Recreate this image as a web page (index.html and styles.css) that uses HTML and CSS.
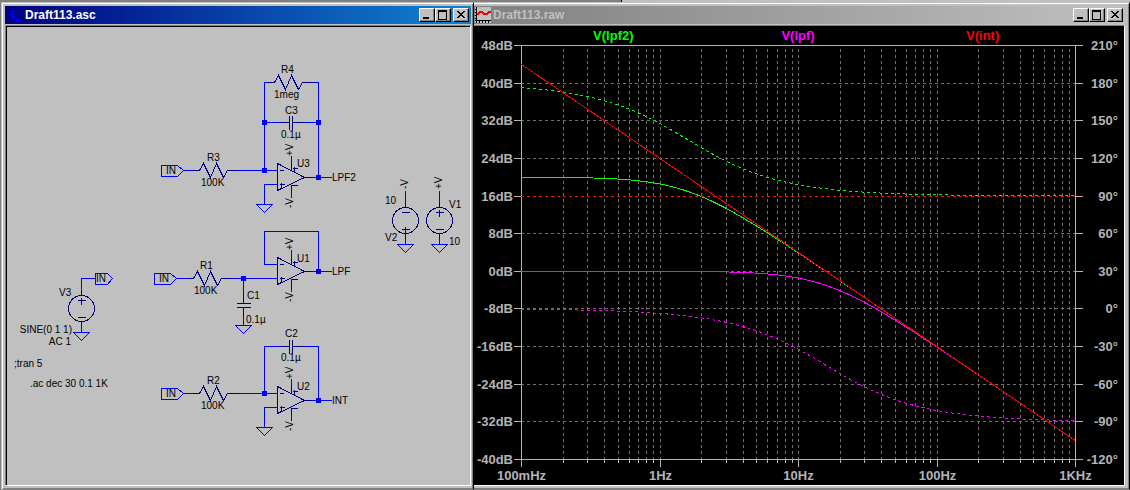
FILE: index.html
```html
<!DOCTYPE html>
<html lang="en">
<head>
<meta charset="utf-8">
<title>Draft113</title>
<link rel="stylesheet" href="styles.css">
</head>
<body>
<div class="workspace-edge"></div>
<main class="windows">
  <section class="window window-schematic">
    <header class="titlebar titlebar-active">
      <svg class="title-icon" width="16" height="16" viewBox="0 0 16 16" aria-hidden="true">
        <path d="M0 7.500H4M10 0L4 6M4 8L11 15" fill="none" stroke="#0000ff"/>
        <path d="M4 3V12" stroke="#0000ff" stroke-width="2"/>
        <path d="M11 16L6 14L9 11Z" fill="#0000ff"/>
      </svg>
      <h1 class="title">Draft113.asc</h1>
      <div class="controls">
        <button class="control" aria-label="Minimize"><svg width="12" height="10"><path d="M2 8H8" stroke="#000" stroke-width="2"/></svg></button>
        <button class="control" aria-label="Maximize"><svg width="12" height="10"><path d="M1.500 1V9.500H9.500V1" fill="none" stroke="#000"/><path d="M1 1H10" stroke="#000" stroke-width="2"/></svg></button>
        <button class="control control-close" aria-label="Close"><svg width="12" height="10"><path d="M2 1L9 8M3 1L10 8M9 1L2 8M10 1L3 8" stroke="#000"/></svg></button>
      </div>
    </header>
    <div class="canvas">
      <svg class="schematic" width="462" height="458" viewBox="7 27 462 458" role="img" aria-label="Filter schematic">
        <defs>
          <path id="resistor" class="part" d="M-7 0H0L4 -7L11 7L17 -7L24 7L28 0H38"/>
          <path id="tag" class="wire" d="M0 0L-6 -5H-22V6H-6Z"/>
          <path id="cap" class="part" d="M-12 0H-1M2 0H15M-1 -7V7M2 -7V7"/>
          <path id="ground" class="wire" d="M-8 0H8L0 8Z"/>
          <rect id="node" x="-2.500" y="-2.500" width="5" height="5" fill="#0000ff"/>
          <g id="opamp">
            <path class="part" d="M0 -14V13L27 0ZM2 -7H6M2 7H7M4 5V10M14 -15V-8M15 -9H20M17 -11V-6M14 7V14M14 8H20M27 0H34"/>
            <path class="wire" d="M14 -22V-15M14 14V20M-6 -7H0M34 0H54"/>
          </g>
          <g id="source">
            <circle class="part" r="13"/>
            <path class="part" d="M0 -18V-13M0 13V18"/>
            <path class="wire" d="M0 -30V-18M0 18V24"/>
          </g>
          <path id="plus" class="part" d="M-4 0H4M0 -3V4"/>
          <path id="minus" class="part" d="M-4 0H4"/>
        </defs>
        <g transform="translate(.5 .5)">
          <path class="wire" d="M183 170H193M237 170H277M264 170V82H268M311 82H318V177M264 122H279M305 122H318M277 184H264V204"/>
          <path class="wire" d="M176 278H187M231 278H277M277 264H264V231H318V271M243 278V295M243 316V325"/>
          <path class="part" d="M243 292V303M236 303H250M236 307H250M243 307V316"/>
          <path class="wire" d="M183 393H193M237 393H277M264 393V346H279M305 346H318V400M277 407H264V427"/>
          <path class="wire" d="M81 279V278H95"/>
          <use href="#tag" x="183" y="170"/><use href="#tag" x="176" y="278"/><use href="#tag" x="183" y="393"/>
          <path class="wire" d="M95 273H107L112 278L107 284H95Z"/>
          <use href="#resistor" x="199" y="170"/><use href="#resistor" x="274" y="82"/>
          <use href="#resistor" x="193" y="278"/><use href="#resistor" x="199" y="393"/>
          <use href="#cap" x="290" y="122"/><use href="#cap" x="290" y="346"/>
          <use href="#opamp" x="277" y="177"/><use href="#opamp" x="277" y="271"/><use href="#opamp" x="277" y="400"/>
          <use href="#ground" x="264" y="204"/><use href="#ground" x="243" y="325"/><use href="#ground" x="264" y="427"/>
          <use href="#ground" x="81" y="332"/><use href="#ground" x="405" y="244"/><use href="#ground" x="439" y="244"/>
          <use href="#source" x="81" y="308"/><use href="#source" x="405" y="220"/><use href="#source" x="439" y="220"/>
          <use href="#plus" x="81" y="300"/><use href="#minus" x="81" y="317"/>
          <use href="#minus" x="405" y="212"/><use href="#plus" x="405" y="229"/>
          <use href="#plus" x="439" y="212"/><use href="#minus" x="439" y="229"/>
          <use href="#node" x="264" y="122"/><use href="#node" x="318" y="122"/>
          <use href="#node" x="264" y="170"/><use href="#node" x="318" y="177"/>
          <use href="#node" x="243" y="278"/><use href="#node" x="318" y="271"/>
          <use href="#node" x="264" y="393"/><use href="#node" x="318" y="400"/>
        </g>
        <g class="labels">
          <text x="281" y="73">R4</text><text x="274" y="98">1meg</text>
          <text x="285" y="114">C3</text><text x="281" y="138">0.1µ</text>
          <text x="207" y="161">R3</text><text x="201" y="186">100K</text>
          <text x="297" y="167">U3</text><text x="332" y="181">LPF2</text><text x="166" y="174">IN</text>
          <text x="200" y="269">R1</text><text x="194" y="294">100K</text>
          <text x="297" y="262">U1</text><text x="332" y="275">LPF</text><text x="159" y="282">IN</text>
          <text x="247" y="299">C1</text><text x="246" y="323">0.1µ</text>
          <text x="285" y="337">C2</text><text x="281" y="361">0.1µ</text>
          <text x="207" y="384">R2</text><text x="201" y="409">100K</text>
          <text x="297" y="390">U2</text><text x="332" y="404">INT</text><text x="166" y="397">IN</text>
          <text x="59" y="296">V3</text><text x="96" y="282">IN</text>
          <text x="72" y="333" text-anchor="end">SINE(0 1 1)</text><text x="71" y="345" text-anchor="end">AC 1</text>
          <text x="14" y="367">;tran 5</text><text x="30" y="387">.ac dec 30 0.1 1K</text>
          <text x="385" y="204">10</text><text x="385" y="241">V2</text>
          <text x="449" y="208">V1</text><text x="449" y="245">10</text>
          <text transform="translate(293 156) rotate(-90)">+V</text><text transform="translate(293 208) rotate(-90)">-V</text>
          <text transform="translate(293 250) rotate(-90)">+V</text><text transform="translate(293 302) rotate(-90)">-V</text>
          <text transform="translate(293 379) rotate(-90)">+V</text><text transform="translate(293 431) rotate(-90)">-V</text>
          <text transform="translate(408 189) rotate(-90)">-V</text><text transform="translate(442 189) rotate(-90)">+V</text>
        </g>
      </svg>
    </div>
  </section>

  <section class="window window-plot">
    <header class="titlebar titlebar-inactive">
      <svg class="title-icon" width="16" height="16" viewBox="0 0 16 16" aria-hidden="true">
        <path d="M0 0H16V16H0Z" fill="#c0c0c0"/>
        <path d="M1.500 0V16M0 13.500H16" stroke="#000"/>
        <path d="M0 2.500H2M0 5.500H2M0 8.500H2M0 11.500H2M4.500 13V16M7.500 13V16M10.500 13V16M13.500 13V16" stroke="#000"/>
        <path d="M2 8L5 5H7L9 7H12L14 5H16" fill="none" stroke="#ff0000" stroke-width="1.500"/>
      </svg>
      <h2 class="title">Draft113.raw</h2>
      <div class="controls">
        <button class="control" aria-label="Minimize"><svg width="12" height="10"><path d="M2 8H8" stroke="#000" stroke-width="2"/></svg></button>
        <button class="control" aria-label="Maximize"><svg width="12" height="10"><path d="M1.500 1V9.500H9.500V1" fill="none" stroke="#000"/><path d="M1 1H10" stroke="#000" stroke-width="2"/></svg></button>
        <button class="control control-close" aria-label="Close"><svg width="12" height="10"><path d="M2 1L9 8M3 1L10 8M9 1L2 8M10 1L3 8" stroke="#000"/></svg></button>
      </div>
    </header>
    <div class="canvas canvas-plot">
      <svg class="plot" id="plot" role="img" aria-label="AC analysis, magnitude and phase"></svg>
    </div>
  </section>
</main>
<script src="plot.js"></script>
</body>
</html>
```
FILE: styles.css
```css
* {
  box-sizing: border-box;
}

body {
  margin: 0;
  height: 100vh;
  display: flex;
  flex-direction: column;
  overflow: hidden;
  background: #808080;
  font-family: "Liberation Sans", Arial, sans-serif;
}

.workspace-edge {
  height: 2px;
  background: linear-gradient(90deg, #808080 55%, #000 55%, #000 calc(55% + 1px), #c0c0c0 calc(55% + 1px));
}

.windows {
  flex: 1;
  min-height: 0;
  display: grid;
  grid-template-columns: 474fr 656fr;
  grid-template-rows: minmax(0, 1fr);
}

.window {
  display: flex;
  flex-direction: column;
  min-width: 0;
  background: #c0c0c0;
  border: 1px solid;
  border-color: #c0c0c0 #000 #808080 #c0c0c0;
  box-shadow: inset 1px 1px #fff, inset -1px -1px #808080;
}

.window-schematic {
  margin-left: 1px;
  padding: 3px 2px 3px 3px;
}

.window-plot {
  border-left: 0;
  padding: 3px 4px 3px 0;
  box-shadow: inset 0 1px #fff, inset -1px -1px #808080;
}

.titlebar {
  height: 18px;
  flex: none;
  display: flex;
  align-items: center;
  padding-right: 2px;
}

.titlebar-active {
  padding-left: 4px;
  background: linear-gradient(90deg, #000080, #1084d0);
  color: #fff;
}

.titlebar-inactive {
  padding-left: 1px;
  background: linear-gradient(90deg, #808080, #c0c0c0);
  color: #c0c0c0;
}

.title-icon {
  flex: none;
  shape-rendering: crispEdges;
}

.title {
  flex: 1;
  margin: 0;
  padding-left: 2px;
  font-size: 12px;
  line-height: 18px;
  font-weight: bold;
}

.titlebar-active .title {
  padding-left: 0;
}

.controls {
  display: flex;
}

.control {
  width: 16px;
  height: 14px;
  padding: 0;
  display: flex;
  align-items: center;
  justify-content: center;
  background: #c0c0c0;
  border: 1px solid;
  border-color: #fff #000 #000 #fff;
  box-shadow: inset -1px -1px #808080;
  shape-rendering: crispEdges;
}

.control-close {
  margin-left: 2px;
}

.canvas {
  flex: 1;
  min-height: 0;
  margin-top: 1px;
  overflow: hidden;
  border: 1px solid;
  border-color: #808080 #fff #fff #808080;
  box-shadow: inset 1px 1px #000;
  padding: 1px 0 0 1px;
}

.canvas-plot {
  border-left: 0;
  padding: 0;
  background: #000;
}

.schematic,
.plot {
  display: block;
  shape-rendering: crispEdges;
}

.plot {
  width: 100%;
  height: 100%;
}

.wire {
  fill: none;
  stroke: #0000ff;
}

.part {
  fill: none;
  stroke: #000080;
}

.labels {
  font-size: 10px;
  fill: #000;
}

.axis {
  fill: none;
  stroke: #b4b4b4;
}

.grid {
  fill: none;
  stroke: #707070;
  stroke-dasharray: 3 3;
}

.axis-label,
.legend {
  font-size: 13px;
  font-weight: bold;
}

.axis-label {
  fill: #b4b4b4;
}

.trace {
  fill: none;
}

.phase {
  stroke-dasharray: 3 3;
}

.lpf2 { stroke: #00ff00; }
.lpf { stroke: #ff00ff; }
.int { stroke: #ff0000; }

.legend { stroke: none; }
.legend.lpf2 { fill: #00ff00; }
.legend.lpf { fill: #ff00ff; }
.legend.int { fill: #ff0000; }
```
FILE: plot.js
```js
const svg = document.getElementById("plot");
const NS = "http://www.w3.org/2000/svg";
const margin = { left: 47, right: 49, top: 19, bottom: 26 };

// Corner frequencies of the RC networks, in hertz.
const F_SLOW = 1 / (2 * Math.PI * 1e6 * 1e-7);
const F_FAST = 1 / (2 * Math.PI * 1e5 * 1e-7);
const deg = (r) => (r * 180) / Math.PI;
const db = (g) => 20 * Math.log10(g);

const traces = [
  { name: "lpf2", mag: (f) => 20 - db(Math.hypot(1, f / F_SLOW)), phase: (f) => 180 - deg(Math.atan(f / F_SLOW)) },
  { name: "lpf", mag: (f) => -db(Math.hypot(1, f / F_FAST)), phase: (f) => -deg(Math.atan(f / F_FAST)) },
  { name: "int", mag: (f) => db(F_FAST / f), phase: () => 90 },
];

function add(tag, className, attrs, text) {
  const el = document.createElementNS(NS, tag);
  el.setAttribute("class", className);
  for (const key in attrs) el.setAttribute(key, attrs[key]);
  if (text) el.textContent = text;
  svg.appendChild(el);
}

function draw() {
  svg.replaceChildren();
  const w = svg.clientWidth;
  const h = svg.clientHeight;
  const left = margin.left;
  const right = w - margin.right;
  const top = margin.top;
  const bottom = h - margin.bottom;
  const snap = (v) => Math.round(v) + 0.5;
  const xAt = (f) => left + ((right - left) * (Math.log10(f) + 1)) / 4;
  const yDb = (v) => top + ((bottom - top) * (48 - v)) / 88;
  const yDeg = (v) => top + ((bottom - top) * (210 - v)) / 330;

  let grid = "";
  let axis = `M${snap(left)} ${snap(top)}H${snap(right)}V${snap(bottom)}H${snap(left)}Z`;

  for (let i = 0; i <= 11; i++) {
    const y = snap(yDb(48 - i * 8));
    // The 16 dB row carries the constant 90° trace.
    if (i > 0 && i < 11 && i !== 4) grid += `M${left} ${y}H${right}`;
    axis += `M${left - 7} ${y}H${left}M${right} ${y}H${right + 8}`;
    add("text", "axis-label", { x: left - 8, y: y + 4.5, "text-anchor": "end" }, `${48 - i * 8}dB`);
    add("text", "axis-label", { x: right + 43, y: y + 4.5, "text-anchor": "end" }, `${210 - i * 30}°`);
  }

  ["100mHz", "1Hz", "10Hz", "100Hz", "1KHz"].forEach((label, d) => {
    const base = Math.pow(10, d - 1);
    const x = snap(xAt(base));
    axis += `M${x} ${bottom}v8`;
    add("text", "axis-label", { x, y: bottom + 21, "text-anchor": "middle" }, label);
    if (d > 0 && d < 4) grid += `M${x} ${top + 4}V${bottom}`;
    for (let k = 2; d < 4 && k < 10; k++) {
      const minor = snap(xAt(base * k));
      grid += `M${minor} ${top + 4}V${bottom}`;
      axis += `M${minor} ${bottom}v4`;
    }
  });

  add("path", "grid", { d: grid });
  add("path", "axis", { d: axis });

  traces.forEach((trace, i) => {
    for (const [kind, fn, toY] of [["mag", trace.mag, yDb], ["phase", trace.phase, yDeg]]) {
      let d = `M${left} ${snap(toY(fn(0.1)))}`;
      if (kind === "phase" && trace.name === "int") {
        d += `H${right}`;
      } else {
        for (let s = 1; s <= 120; s++) {
          const f = Math.pow(10, -1 + s / 30);
          d += `L${xAt(f)} ${toY(fn(f)) + 0.4}`;
        }
      }
      add("path", `trace ${kind} ${trace.name}`, { d });
    }
    const x = left + ((right - left) * (2 * i + 1)) / 6;
    add("text", `legend ${trace.name}`, { x, y: top - 5, "text-anchor": "middle" }, `V(${trace.name})`);
  });
}

new ResizeObserver(draw).observe(svg);
draw();
```
